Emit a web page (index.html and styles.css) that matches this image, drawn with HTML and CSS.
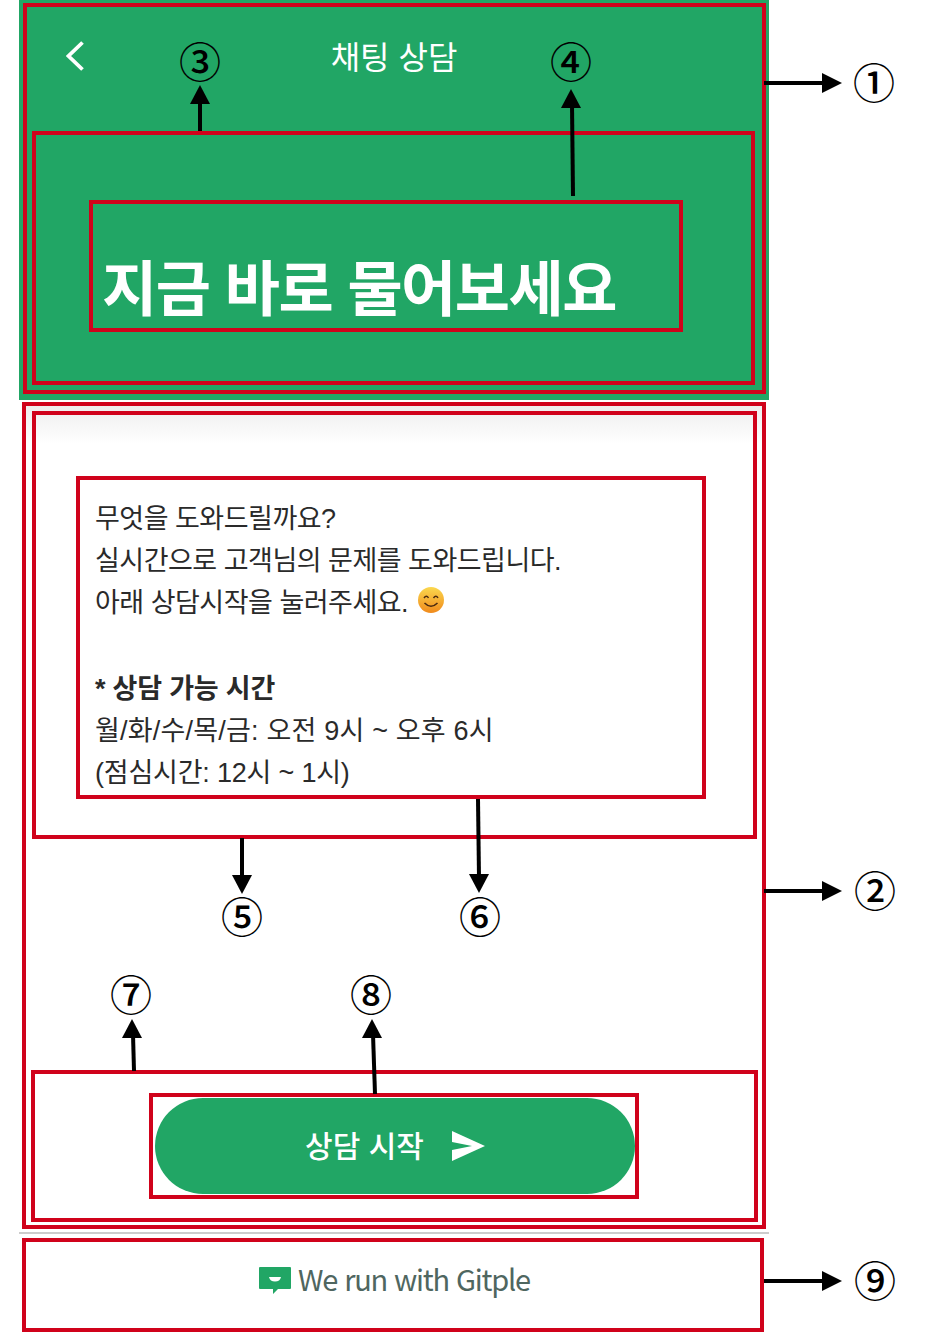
FILE: index.html
```html
<!DOCTYPE html>
<html lang="ko">
<head>
<meta charset="utf-8">
<title>채팅 상담</title>
<link rel="stylesheet" href="styles.css">
</head>
<body>
<main class="screen">
  <section class="hero">
    <div class="box hero-frame">
      <div class="topbar">
        <svg class="back" width="18" height="30" viewBox="0 0 18 30"><path d="M16.5 1.5 2.5 15l14 13.500" fill="none" stroke="#fff" stroke-width="3.800"/></svg>
        <h2 class="title">채팅 상담</h2>
      </div>
      <div class="box hero-body">
        <div class="box hero-text">
          <h1 class="headline">지금 바로 물어보세요</h1>
        </div>
      </div>
    </div>
  </section>

  <section class="box chat-frame">
    <div class="box message-area">
      <div class="box message">
        <p class="line">무엇을 도와드릴까요?</p>
        <p class="line">실시간으로 고객님의 문제를 도와드립니다.</p>
        <p class="line">아래 상담시작을 눌러주세요.
          <svg class="emoji" width="26" height="26" viewBox="0 0 26 26">
            <defs><linearGradient id="face" x1="0" y1="0" x2="0" y2="1"><stop offset="0" stop-color="#fbd84e"/><stop offset="1" stop-color="#f08a1c"/></linearGradient></defs>
            <circle cx="13" cy="13" r="13" fill="url(#face)"/>
            <path d="M6 11q2.500-3.500 4.500 0M15.500 11q2.500-3.500 4.500 0" fill="none" stroke="#4a2a10" stroke-width="1.500"/>
            <path d="M6.500 16q6.500 6.500 13 0" fill="none" stroke="#4a2a10" stroke-width="1.500"/>
          </svg>
        </p>
        <div class="blank"></div>
        <p class="line strong">* 상담 가능 시간</p>
        <p class="line wide">월/화/수/목/금: 오전 9시 ~ 오후 6시</p>
        <p class="line mid">(점심시간: 12시 ~ 1시)</p>
      </div>
    </div>
    <div class="box action-area">
      <div class="box action">
        <button class="start" type="button">
          <span class="start-label">상담 시작</span>
          <svg width="33" height="30" viewBox="0 0 33 30"><path d="M0 0 33 15 0 30V19L20 15 0 11Z" fill="#fff"/></svg>
        </button>
      </div>
    </div>
  </section>

  <div class="divider"></div>

  <footer class="box footer">
    <svg class="logo" width="32" height="27" viewBox="0 0 32 27"><path d="M1 0H31a1 1 0 0 1 1 1V21a1 1 0 0 1-1 1H19l-5 5v-5H1a1 1 0 0 1-1-1V1a1 1 0 0 1 1-1Z" fill="#21a665"/><path d="M10 10H22Q21 14.500 16 14.500T10 10Z" fill="#fff"/></svg>
    <span class="brand">We run with Gitple</span>
  </footer>
</main>

<svg class="arrows" width="944" height="1334" viewBox="0 0 944 1334">
  <g fill="none" stroke="#000" stroke-width="4">
    <path d="M200 131V100"/>
    <path d="M573 196 572 104"/>
    <path d="M764 83H826"/>
    <path d="M764 891H826"/>
    <path d="M764 1281H826"/>
    <path d="M242 838V878"/>
    <path d="M478 799 479 878"/>
    <path d="M134 1071 133 1034"/>
    <path d="M375 1094 373 1034"/>
  </g>
  <g fill="#000">
    <path d="M200 85 210 104H190Z"/>
    <path d="M571 89 581 108H561Z"/>
    <path d="M842 83 822 73V93Z"/>
    <path d="M842 891 822 881V901Z"/>
    <path d="M842 1281 822 1271V1291Z"/>
    <path d="M242 894 232 875H252Z"/>
    <path d="M479 893 469 874H489Z"/>
    <path d="M132 1019 122 1038H142Z"/>
    <path d="M372 1019 362 1038H382Z"/>
  </g>
</svg>
<span class="mark m1">①</span>
<span class="mark m2">②</span>
<span class="mark m3">③</span>
<span class="mark m4">④</span>
<span class="mark m5">⑤</span>
<span class="mark m6">⑥</span>
<span class="mark m7">⑦</span>
<span class="mark m8">⑧</span>
<span class="mark m9">⑨</span>
</body>
</html>
```

FILE: styles.css
```css
* { box-sizing: border-box; margin: 0; padding: 0; }
html, body { height: 1334px; overflow: hidden; background: #fff; }
body { position: relative; font-family: "Liberation Sans", "Noto Sans CJK KR", sans-serif; color: #222; }

.screen { width: 750px; margin-left: 19px; display: flex; flex-direction: column; }
.box { border: 4px solid #d0021b; }

.hero { height: 400px; background: #21a665; padding: 3px 3px 6px 4px; }
.hero-frame { height: 391px; display: flex; flex-direction: column; }
.topbar { height: 124px; position: relative; display: flex; justify-content: center; }
.back { position: absolute; left: 39px; top: 34px; }
.title { font-family: "Noto Sans CJK KR", sans-serif; font-size: 32px; font-weight: 400; line-height: 46px; color: #fff; margin-top: 25px; margin-right: 1px; }
.hero-body { height: 254px; margin: 0 7px 5px 5px; padding: 65px 68px 0 53px; }
.hero-text { height: 132px; padding: 38px 0 0 9px; }
.headline { font-family: "Noto Sans CJK KR", sans-serif; font-size: 60px; font-weight: 700; line-height: 86px; color: #fff; letter-spacing: -1.5px; white-space: nowrap; }

.chat-frame { height: 827px; margin: 2px 3px 0 3px; display: flex; flex-direction: column; justify-content: space-between; background: linear-gradient(#eee, #fff 38px); }
.message-area { height: 428px; margin: 5px 5px 0 6px; padding: 61px 0 0 40px; background: transparent; }
.message { width: 630px; height: 323px; padding: 18px 0 0 15px; background: #fff; }
.line { font-size: 27px; line-height: 42px; letter-spacing: -0.5px; white-space: nowrap; color: #2a2a2a; }
.strong { font-weight: 700; letter-spacing: -0.2px; }
.wide { letter-spacing: 0.2px; }
.mid { letter-spacing: -0.2px; }
.blank { height: 44px; }
.emoji { vertical-align: -1px; margin-left: 3px; }

.action-area { height: 152px; margin: 0 4px 3px 5px; padding: 19px 0 0 114px; }
.action { width: 490px; height: 106px; padding: 1px 0 0 2px; }
.start { width: 480px; height: 96px; border: 0; border-radius: 48px; background: #21a665; color: #fff; font-family: "Noto Sans CJK KR", sans-serif; font-size: 30px; font-weight: 500; display: flex; align-items: center; justify-content: center; gap: 28px; }
.start-label { margin-bottom: 4px; }

.divider { height: 2px; margin-top: 3px; background: #ccc; }
.footer { height: 94px; margin: 4px 5px 0 3px; display: flex; align-items: center; justify-content: center; gap: 7px; padding: 0 0 14px 3px; }
.logo { margin-top: 5px; }
.brand { font-family: "Noto Sans CJK KR", sans-serif; font-size: 29px; line-height: 40px; color: #4f6660; letter-spacing: -1.2px; }

.arrows { position: absolute; left: 0; top: 0; pointer-events: none; }
.mark { position: absolute; width: 44px; height: 44px; font-family: "Noto Sans CJK KR", sans-serif; font-size: 42px; font-weight: 500; line-height: 44px; text-align: center; color: #000; }
.m1 { left: 852px; top: 59px; }
.m2 { left: 853px; top: 867px; }
.m3 { left: 178px; top: 38px; }
.m4 { left: 549px; top: 38px; }
.m5 { left: 220px; top: 893px; }
.m6 { left: 458px; top: 893px; }
.m7 { left: 109px; top: 971px; }
.m8 { left: 349px; top: 971px; }
.m9 { left: 853px; top: 1257px; }
```
